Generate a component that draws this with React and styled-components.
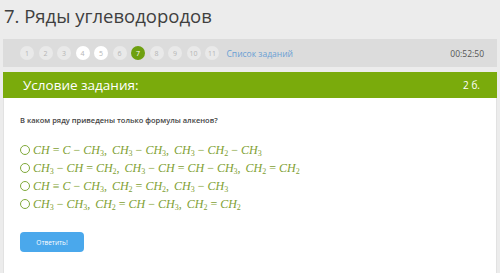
import React from 'react';
import styled, { createGlobalStyle } from 'styled-components';

const Global = createGlobalStyle`
  html, body {
    margin: 0;
    padding: 0;
    background: #ececec;
    font-family: 'Open Sans', 'Liberation Sans', sans-serif;
  }
`;

const Page = styled.div`
  width: 500px;
  height: 273px;
  overflow: hidden;
  padding: 0 3px;
  box-sizing: border-box;
`;

const Title = styled.h1`
  margin: 0;
  padding: 4px 0 0 1px;
  height: 39px;
  box-sizing: border-box;
  font-weight: 400;
  font-size: 18.5px;
  line-height: 24px;
  color: #3f3f3f;
`;

const NavBar = styled.div`
  height: 28px;
  background: #dcdcdc;
  display: flex;
  align-items: center;
  padding: 0 13px 0 17px;
  gap: 4.5px;
`;

const Step = styled.span`
  width: 14px;
  height: 14px;
  border-radius: 50%;
  display: flex;
  align-items: center;
  justify-content: center;
  font-size: 7px;
  color: ${p => (p.$active ? '#fff' : '#b5b5b5')};
  background: ${p => (p.$active ? '#6ea010' : p.$done ? '#ffffff' : '#e9e9e9')};
`;

const TaskList = styled.span`
  margin-left: 3px;
  font-size: 8.5px;
  color: #6a9fd4;
`;

const Timer = styled.span`
  margin-left: auto;
  font-size: 8.5px;
  color: #555;
`;

const Card = styled.div`
  margin-top: 5px;
  background: #fff;
  border: 1px solid #e2e2e2;
  border-top: none;
`;

const CardHead = styled.div`
  height: 26px;
  background: #7aab0c;
  display: flex;
  align-items: center;
  justify-content: space-between;
  padding: 0 17px 0 20px;
  color: #fff;
  margin: 0 -1px;
`;

const HeadTitle = styled.span`
  font-size: 13.5px;
`;

const Points = styled.span`
  font-size: 10px;
`;

const CardBody = styled.div`
  padding: 17px 16px 22px 16px;
`;

const Question = styled.p`
  margin: 0 0 17px;
  font-size: 7.5px;
  font-weight: 600;
  color: #444;
`;

const Options = styled.div`
  display: flex;
  flex-direction: column;
  gap: 2px;
`;

const Option = styled.label`
  display: flex;
  align-items: center;
  height: 16px;
`;

const Radio = styled.span`
  width: 8px;
  height: 8px;
  border: 1.5px solid #7fa93a;
  border-radius: 50%;
  margin-right: 3px;
  flex: none;
`;

const Formula = styled.span`
  font-family: 'Liberation Serif', 'DejaVu Serif', serif;
  font-size: 12px;
  color: #7f9f33;
  white-space: nowrap;
`;

const Var = styled.i``;

const Sub = styled.sub`
  font-style: normal;
  font-size: 8px;
  vertical-align: -2px;
  line-height: 0;
`;

const Op = styled.span`
  padding: 0 3px;
`;

const Sep = styled.span`
  padding-right: 5px;
`;

const Submit = styled.button`
  margin-top: 20px;
  width: 64px;
  height: 20px;
  border: none;
  border-radius: 4px;
  background: #4aa8ec;
  color: #fff;
  font-family: 'Open Sans', 'Liberation Sans', sans-serif;
  font-size: 6.5px;
  padding: 0;
`;

function renderFormula(src) {
  const parts = [];
  let i = 0;
  let k = 0;
  while (i < src.length) {
    const c = src[i];
    if (/[A-Z]/.test(c)) {
      let j = i;
      while (j < src.length && /[A-Z]/.test(src[j])) j++;
      parts.push(<Var key={k++}>{src.slice(i, j)}</Var>);
      i = j;
    } else if (/[0-9]/.test(c)) {
      parts.push(<Sub key={k++}>{c}</Sub>);
      i++;
    } else if (c === '=' || c === '-' || c === '≡') {
      parts.push(<Op key={k++}>{c === '-' ? '−' : c}</Op>);
      i++;
    } else if (c === ',') {
      parts.push(<Sep key={k++}>,</Sep>);
      i++;
    } else {
      i++;
    }
  }
  return parts;
}

const answers = [
  'CH=C-CH3, CH3-CH3, CH3-CH2-CH3',
  'CH3-CH=CH2, CH3-CH=CH-CH3, CH2=CH2',
  'CH≡C-CH3, CH2=CH2, CH3-CH3',
  'CH3-CH3, CH2=CH-CH3, CH2=CH2',
];

const steps = [1, 2, 3, 4, 5, 6, 7, 8, 9, 10, 11];

export default function App() {
  return (
    <Page>
      <Global />
      <Title>7. Ряды углеводородов</Title>
      <NavBar>
        {steps.map(n => (
          <Step key={n} $active={n === 7} $done={n === 4 || n === 5}>{n}</Step>
        ))}
        <TaskList>Список заданий</TaskList>
        <Timer>00:52:50</Timer>
      </NavBar>
      <Card>
        <CardHead>
          <HeadTitle>Условие задания:</HeadTitle>
          <Points>2 б.</Points>
        </CardHead>
        <CardBody>
          <Question>В каком ряду приведены только формулы алкенов?</Question>
          <Options>
            {answers.map(a => (
              <Option key={a}>
                <Radio />
                <Formula>{renderFormula(a)}</Formula>
              </Option>
            ))}
          </Options>
          <Submit>Ответить!</Submit>
        </CardBody>
      </Card>
    </Page>
  );
}
